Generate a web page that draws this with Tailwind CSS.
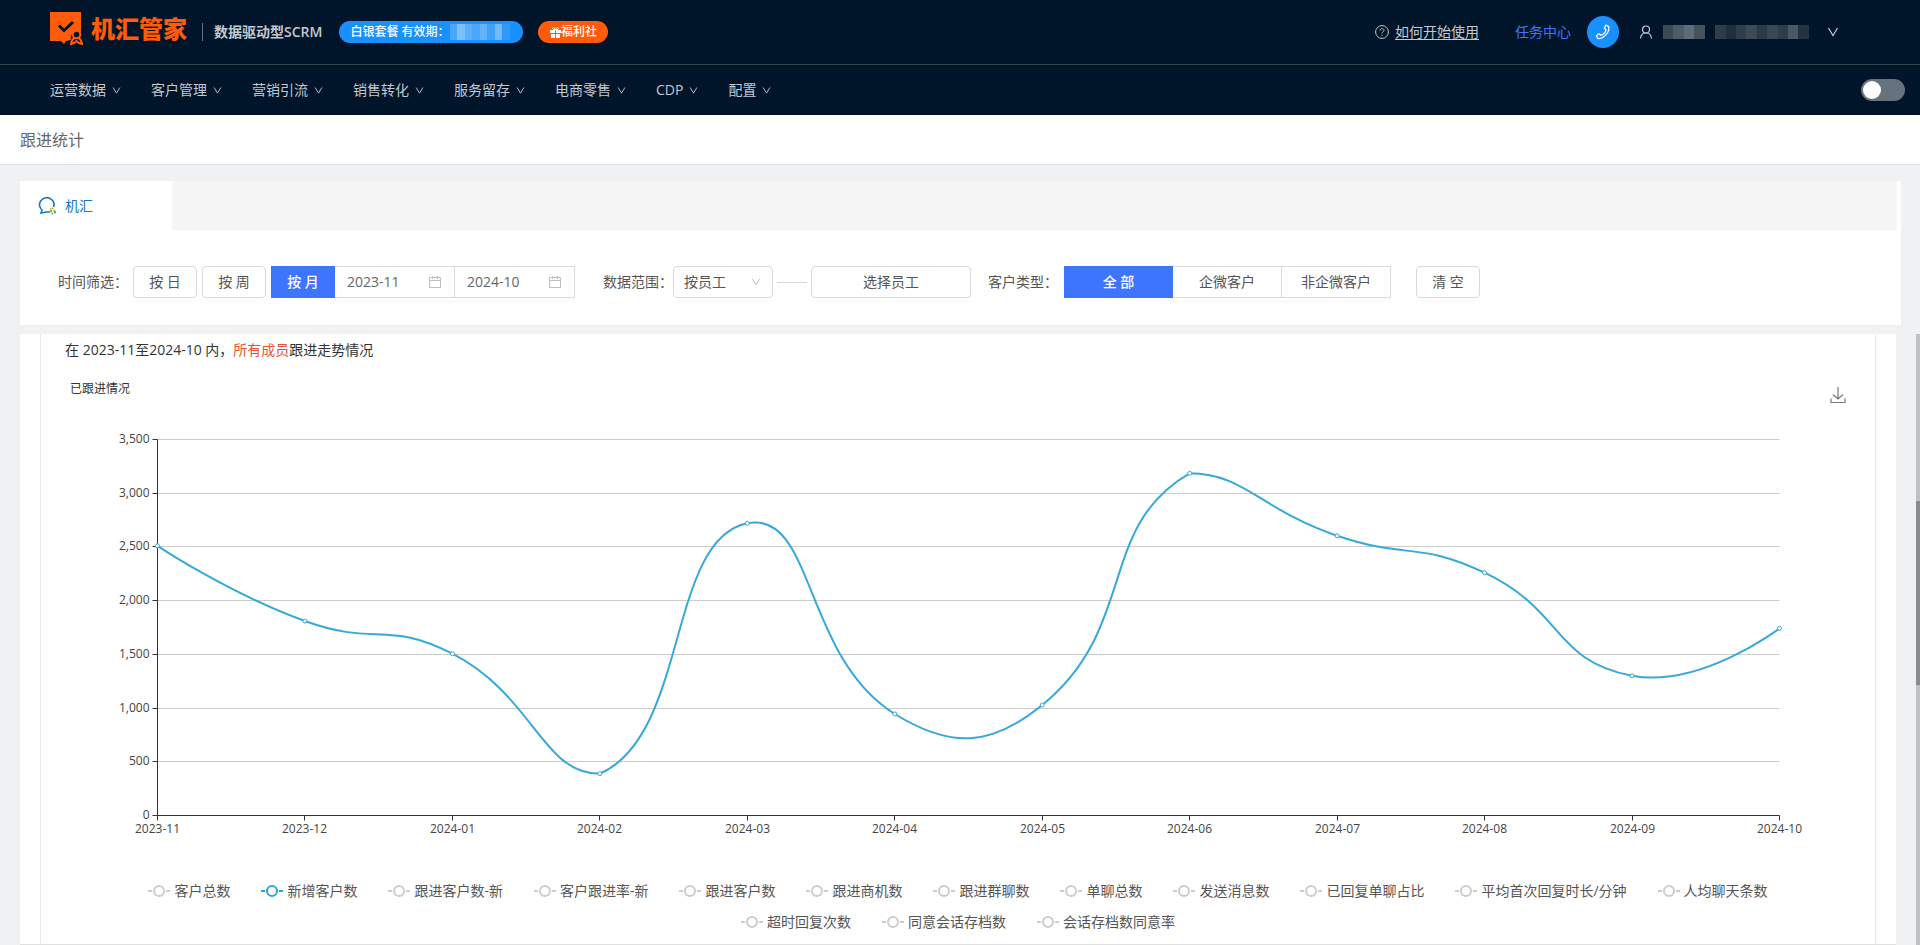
<!DOCTYPE html>
<html lang="zh-CN">
<head>
  <meta charset="UTF-8" />
  <meta name="viewport" content="width=device-width, initial-scale=1.0" />
  <script src="https://cdn.jsdelivr.net/npm/@tailwindcss/browser@4"></script>
  <title>跟进统计</title>
</head>

<body class="min-h-screen flex flex-col bg-[#eff1f3] text-sm text-[#666] font-['Open_Sans','Noto_Sans_CJK_SC',sans-serif]">

  <svg class="hidden">
    <symbol id="chevron" viewBox="0 0 12 12">
      <path d="M1.5 2 6 9.5 10.5 2" fill="none" stroke="currentColor" stroke-width="1.2" />
    </symbol>
    <symbol id="calendar" viewBox="0 0 14 14">
      <path d="M1.5 2.5h11v10h-11zM1.5 5.5h11M4.5 1v3M9.5 1v3" fill="none" stroke="currentColor" />
    </symbol>
  </svg>

  <header class="bg-[#001529] text-[#c3c9cf]">
    <!-- Top bar -->
    <div class="h-[65px] pl-[50px] pr-[81px] flex items-center border-b border-[#33434f]">
      <svg class="w-[34px] h-[33px] mt-[-7px]" viewBox="0 0 34 33">
        <path d="M0 0h31v20a7 7 0 0 0-10 8l-5 1-2 3-3-3H0z" fill="#ff5b08" />
        <path d="M9 13.500l5 5L23 10" fill="none" stroke="#001529" stroke-width="3" />
        <circle cx="26.500" cy="22.500" r="3.800" fill="none" stroke="#ff5b08" stroke-width="2" />
        <path d="M24.500 26c-2 1-3 3-3.500 6l3-1 2.500-2 2.500 2 3 1c-.5-3-1.500-5-3.500-6" fill="none" stroke="#ff5b08" stroke-width="2" />
      </svg>
      <span class="ml-[7px] mt-[-7px] text-2xl font-black text-[#ff5b08]">机汇管家</span>
      <span class="ml-[15px] w-px h-[18px] bg-[#66737f]"></span>
      <span class="ml-[11px] font-semibold">数据驱动型SCRM</span>
      <div class="ml-[17px] w-[184px] h-[22px] px-[11px] flex items-center rounded-full bg-[#1890ff] text-xs font-medium text-white">
        <span class="whitespace-nowrap">白银套餐 有效期：</span>
        <span class="flex h-4 w-[60px]">
          <span class="flex-1 bg-[#4ba7fa]"></span>
          <span class="flex-1 bg-[#7fc0fb]"></span>
          <span class="flex-1 bg-[#5aaffb]"></span>
          <span class="flex-1 bg-[#4ba7fa]"></span>
          <span class="flex-1 bg-[#62b3fb]"></span>
          <span class="flex-1 bg-[#3fa2fa]"></span>
          <span class="flex-1 bg-[#74bbfb]"></span>
          <span class="flex-1 bg-[#3099fb]"></span>
        </span>
      </div>
      <button class="ml-[15px] w-[70px] h-[22px] flex items-center justify-center rounded-full bg-[#ff5b08] text-xs font-medium text-white">
        <svg class="size-[11px]" viewBox="0 0 11 11" fill="currentColor">
          <path d="M0 3h5v3H0zM6 3h5v3H6zM1 7h4v4H1zM6 7h4v4H6z" />
          <path d="M5.500 3C2 3 2 .7 3.500.7s2 2.300 2 2.300S6 .7 7.500.7 9 3 5.500 3z" fill="none" stroke="currentColor" />
        </svg>
        福利社
      </button>

      <div class="ml-auto flex items-center">
        <a href="#" class="flex items-center gap-[6px]">
          <svg class="size-[14px]" viewBox="0 0 14 14" fill="none" stroke="currentColor">
            <circle cx="7" cy="7" r="6.400" />
            <path d="M5 5.600C5 3 9 3 9 5.500 9 7 7 6.800 7 8.400M7 9.500v1.200" />
          </svg>
          <span class="underline underline-offset-2">如何开始使用</span>
        </a>
        <a href="#" class="ml-9 text-[#3e76ff]">任务中心</a>
        <button class="ml-4 size-8 rounded-full bg-[#1890ff] text-white flex items-center justify-center" aria-label="电话">
          <svg class="size-4" viewBox="0 0 16 16" fill="none" stroke="currentColor" stroke-width="1.300" stroke-linejoin="round">
            <path d="M11 1.200l2.700 1.300C15.300 7.500 8.500 15 3 14.600L1.300 12l2.500-2.200 2 1.300C8 10.500 10.500 8 11 5.800L9.300 4z" />
          </svg>
        </button>
        <button class="ml-5 flex items-center" aria-label="账户">
          <svg class="size-[14px]" viewBox="0 0 14 14" fill="none" stroke="currentColor" stroke-width="1.200">
            <circle cx="7" cy="4.500" r="3.500" />
            <path d="M1.500 13.500C1.700 10 4 8 7 8s5.300 2 5.500 5.500" />
          </svg>
          <span class="ml-[10px] mr-[18px] flex h-[14px] w-[146px]">
            <span class="flex-1 bg-[#3b4955]"></span>
            <span class="flex-1 bg-[#4f5c67]"></span>
            <span class="flex-1 bg-[#5f6b75]"></span>
            <span class="flex-1 bg-[#45525e]"></span>
            <span class="flex-1 bg-[#001529]"></span>
            <span class="flex-1 bg-[#2f3d4a]"></span>
            <span class="flex-1 bg-[#1d2f3e]"></span>
            <span class="flex-1 bg-[#303e4b]"></span>
            <span class="flex-1 bg-[#3d4a56]"></span>
            <span class="flex-1 bg-[#2c3b48]"></span>
            <span class="flex-1 bg-[#3a4753]"></span>
            <span class="flex-1 bg-[#2f3d4a]"></span>
            <span class="flex-1 bg-[#4b5762]"></span>
            <span class="flex-1 bg-[#223341]"></span>
          </span>
          <svg class="size-3"><use href="#chevron" /></svg>
        </button>
      </div>
    </div>

    <!-- Main nav -->
    <div class="h-[50px] px-[50px] pr-[15px] flex items-center justify-between">
      <nav class="flex gap-[30px]">
        <a href="#" class="flex items-center gap-[6px]">运营数据<svg class="size-[9px]"><use href="#chevron" /></svg></a>
        <a href="#" class="flex items-center gap-[6px]">客户管理<svg class="size-[9px]"><use href="#chevron" /></svg></a>
        <a href="#" class="flex items-center gap-[6px]">营销引流<svg class="size-[9px]"><use href="#chevron" /></svg></a>
        <a href="#" class="flex items-center gap-[6px]">销售转化<svg class="size-[9px]"><use href="#chevron" /></svg></a>
        <a href="#" class="flex items-center gap-[6px]">服务留存<svg class="size-[9px]"><use href="#chevron" /></svg></a>
        <a href="#" class="flex items-center gap-[6px]">电商零售<svg class="size-[9px]"><use href="#chevron" /></svg></a>
        <a href="#" class="flex items-center gap-[6px]">CDP<svg class="size-[9px]"><use href="#chevron" /></svg></a>
        <a href="#" class="flex items-center gap-[6px]">配置<svg class="size-[9px]"><use href="#chevron" /></svg></a>
      </nav>
      <input type="checkbox" role="switch" aria-label="切换主题"
        class="appearance-none w-11 h-[22px] p-[2px] rounded-full bg-[#66737f] before:content-[''] before:block before:size-[18px] before:rounded-full before:bg-white" />
    </div>
  </header>

  <h1 class="h-[50px] px-5 flex items-center bg-white border-b border-[#e3e5e8] text-base">跟进统计</h1>

  <!-- Account tab + filters -->
  <section class="mt-4 ml-5 mr-[19px] bg-white">
    <div class="mr-1 flex bg-[#f5f5f5]">
      <button class="w-[152px] h-[49px] pl-[18px] flex items-center gap-[9px] bg-white text-[#1677c2]">
        <svg class="size-[18px]" viewBox="0 0 18 18" fill="none">
          <path d="M12 15H8.500L3 16l1-3A7.300 7 0 1 1 15.700 10" stroke="#1677c2" stroke-width="1.600" />
          <path d="M14.500 10.500v2M12 14h2M14.500 15.500v2M15.500 14h2" stroke="#8cb43c" stroke-width="1.800" />
          <circle cx="12.500" cy="12" r="1" fill="#f5c332" />
          <circle cx="17" cy="15.500" r="1" fill="#2f8fd8" />
        </svg>
        机汇
      </button>
    </div>

    <form class="h-[95px] px-[38px] pt-[9px] flex items-center whitespace-nowrap text-[#555]">
      <span class="mr-[5px]">时间筛选：</span>
      <div class="flex items-center gap-[5px]">
        <button type="button" class="w-16 h-8 border border-[#d9d9d9] rounded">按 日</button>
        <button type="button" class="w-16 h-8 border border-[#d9d9d9] rounded">按 周</button>
        <button type="button" class="w-16 h-8 bg-[#3e75ff] font-medium text-white">按 月</button>
      </div>
      <label class="w-[120px] h-8 px-3 flex items-center justify-between border border-l-0 border-[#d9d9d9]">
        <input type="text" value="2023-11" aria-label="开始月份" class="w-16 text-[#666] outline-none" />
        <svg class="size-[14px] text-[#bfbfbf]"><use href="#calendar" /></svg>
      </label>
      <label class="w-[120px] h-8 px-3 flex items-center justify-between border border-l-0 border-[#d9d9d9]">
        <input type="text" value="2024-10" aria-label="结束月份" class="w-16 text-[#666] outline-none" />
        <svg class="size-[14px] text-[#bfbfbf]"><use href="#calendar" /></svg>
      </label>

      <label for="scope" class="ml-7">数据范围：</label>
      <div class="relative">
        <select id="scope" class="appearance-none w-[100px] h-8 pl-[10px] border border-[#d9d9d9] rounded">
          <option>按员工</option>
          <option>按部门</option>
        </select>
        <svg class="absolute right-3 top-[11px] size-[10px] text-[#bfbfbf] pointer-events-none"><use href="#chevron" /></svg>
      </div>
      <span class="mx-1 w-[30px] h-px bg-[#d9d9d9]"></span>
      <button type="button" class="w-40 h-8 border border-[#d9d9d9] rounded">选择员工</button>

      <span class="ml-[17px] mr-[6px]">客户类型：</span>
      <div class="flex">
        <button type="button" class="w-[109px] h-8 bg-[#3e75ff] font-medium text-white">全 部</button>
        <button type="button" class="w-[109px] h-8 border-y border-r border-[#d9d9d9]">企微客户</button>
        <button type="button" class="w-[109px] h-8 border-y border-r border-[#d9d9d9]">非企微客户</button>
      </div>
      <button type="reset" class="ml-[25px] w-16 h-8 border border-[#d9d9d9] rounded">清 空</button>
    </form>
  </section>

  <!-- Trend chart -->
  <main class="mt-[9px] pl-5 flex-1 flex justify-between">
    <section class="flex-1 px-5 bg-white border-b border-[#e0e0e0]">
      <div class="h-full pb-[11px] border-x border-[#e8e8e8]">
        <h2 class="h-8 px-6 flex items-center text-[#333]">
          <span>在 2023-11至2024-10 内，<span class="text-[#e5532d]">所有成员</span>跟进走势情况</span>
        </h2>
        <div class="h-[45px] px-[29px] flex items-center justify-between text-xs text-[#333]">
          <h3>已跟进情况</h3>
          <button class="mt-3" aria-label="下载图片">
            <svg class="size-4" viewBox="0 0 16 16" fill="none" stroke="#777" stroke-width="1.200">
              <path d="M8 0v12M3 7.500l5 4.500 5-4.500M1 11.500v4h14v-4" />
            </svg>
          </button>
        </div>
        <svg id="chart" class="block w-full h-[440px]" role="img" aria-label="新增客户数走势"></svg>
        <div id="legend" class="pt-[30px] px-10 flex flex-wrap justify-center gap-x-[31px] gap-y-[11px] leading-5"></div>
      </div>
    </section>
    <div class="ml-5 w-1 pt-[167px] bg-[#c1c1c1]">
      <div class="h-[184px] bg-[#8b8b8b]"></div>
    </div>
  </main>

  <script>
    const months = ['2023-11', '2023-12', '2024-01', '2024-02', '2024-03', '2024-04',
      '2024-05', '2024-06', '2024-07', '2024-08', '2024-09', '2024-10'];
    const values = [2510, 1810, 1506, 389, 2720, 945, 1028, 3185, 2604, 2260, 1301, 1742];
    const series = ['客户总数', '新增客户数', '跟进客户数-新', '客户跟进率-新', '跟进客户数', '跟进商机数',
      '跟进群聊数', '单聊总数', '发送消息数', '已回复单聊占比', '平均首次回复时长/分钟', '人均聊天条数',
      '超时回复次数', '同意会话存档数', '会话存档数同意率'];
    const active = '新增客户数';
    const MAX = 3500;

    const chart = document.getElementById('chart');
    const legend = document.getElementById('legend');

    // Smooth line whose control points never leave the data's own range
    function smoothPath(pts, smooth = 0.5) {
      const ys = pts.map(p => p[1]);
      const lo = Math.min(...ys);
      const hi = Math.max(...ys);
      const clamp = y => Math.min(hi, Math.max(lo, y));
      const dist = (a, b) => Math.hypot(a[0] - b[0], a[1] - b[1]);

      let d = `M${pts[0][0]} ${pts[0][1]}`;
      let cp0 = pts[0];
      for (let i = 1; i < pts.length; i++) {
        const p = pts[i];
        const prev = pts[i - 1];
        const next = pts[i + 1];
        let cp1 = p;
        let nextCp = p;
        if (next) {
          const v = [next[0] - prev[0], next[1] - prev[1]];
          const ratio = dist(p, next) / (dist(p, next) + dist(p, prev));
          const back = smooth * (1 - ratio);
          const fwd = smooth * ratio;
          cp1 = [p[0] - v[0] * back, clamp(p[1] - v[1] * back)];
          nextCp = [p[0] + v[0] * fwd, clamp(p[1] + v[1] * fwd)];
        }
        d += `C${cp0[0]} ${cp0[1]} ${cp1[0]} ${cp1[1]} ${p[0]} ${p[1]}`;
        cp0 = nextCp;
      }
      return d;
    }

    function drawChart() {
      const left = 116.5;
      const right = chart.getBoundingClientRect().width - 95.5;
      const top = 28.5;
      const bottom = 404.5;
      const xAt = i => left + (right - left) * i / (months.length - 1);
      const yAt = v => bottom - (bottom - top) * v / MAX;
      const snap = n => Math.floor(n) + 0.5;

      let out = '';
      for (let v = 0; v <= MAX; v += 500) {
        const y = snap(yAt(v));
        if (v) out += `<path d="M${left} ${y}H${right}" class="stroke-[#ccc]" />`;
        out += `<path d="M${left - 5} ${y}H${left}" class="stroke-[#333]" />`;
        out += `<text x="${left - 8}" y="${y + 3}" text-anchor="end" class="text-xs fill-[#444]">${v.toLocaleString('en-US')}</text>`;
      }
      months.forEach((m, i) => {
        const x = snap(xAt(i));
        out += `<path d="M${x} ${bottom}v5" class="stroke-[#333]" />`;
        out += `<text x="${x}" y="${bottom + 17}" text-anchor="middle" class="text-xs fill-[#444]">${m}</text>`;
      });
      out += `<path d="M${left} ${top}V${bottom}H${right}" class="fill-none stroke-[#333]" />`;

      const pts = values.map((v, i) => [xAt(i), yAt(v)]);
      out += `<path d="${smoothPath(pts)}" class="fill-none stroke-[#36a9d8] stroke-2" />`;
      pts.forEach(([x, y]) => {
        out += `<circle cx="${x}" cy="${y}" r="2" class="fill-white stroke-[#36a9d8]" />`;
      });
      chart.innerHTML = out;
    }

    series.forEach(name => {
      const btn = document.createElement('button');
      btn.className = 'flex items-center gap-1 whitespace-nowrap text-[#555]';
      btn.setAttribute('aria-pressed', name === active);
      const color = name === active ? 'text-[#2ba6d9]' : 'text-[#ccc]';
      btn.innerHTML = `
        <svg class="w-[22px] h-[14px] ${color}" viewBox="0 0 22 14" fill="none" stroke="currentColor" stroke-width="2">
          <path d="M0 7h4M18 7h4" /><circle cx="11" cy="7" r="5" />
        </svg>
        <span>${name}</span>`;
      legend.appendChild(btn);
    });

    // Redraw whenever the chart gets a new width
    new ResizeObserver(drawChart).observe(chart);
    window.addEventListener('load', drawChart);
  </script>
</body>
</html>
